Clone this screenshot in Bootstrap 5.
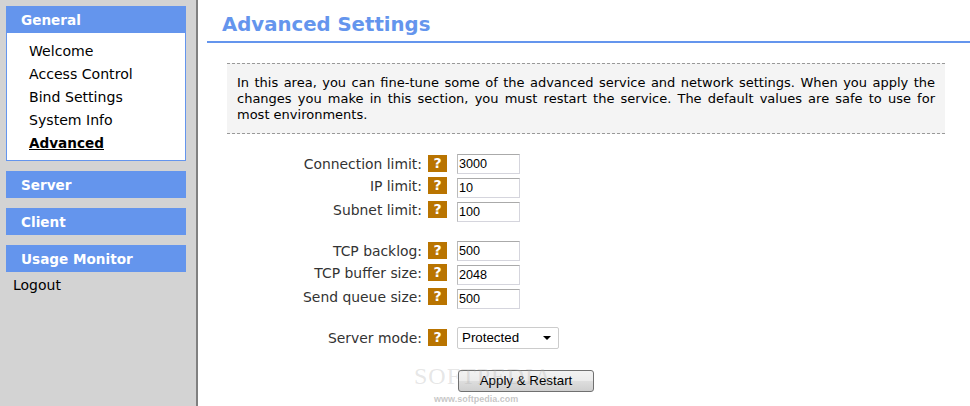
<!DOCTYPE html>
<html lang="en">
  <head>
    <meta charset="UTF-8" />
    <meta name="viewport" content="width=device-width, initial-scale=1.0" />
    <title>Advanced Settings</title>
    <link
      href="https://cdn.jsdelivr.net/npm/bootstrap@5.3.0/dist/css/bootstrap.min.css"
      rel="stylesheet"
    />
    <style>
      html, body { height: 406px; overflow: hidden; }
      body { font-family: "DejaVu Sans", Verdana, sans-serif; font-size: 14px; color: #000; background: #fff; }
      .app-shell { height: 406px; position: relative; overflow: hidden; }
      .side-area { width: 198px; flex: none; background: #d3d3d3; border-right: 2px solid #808080; padding: 6px 10px 0 6px; }
      .side-head { height: 27px; line-height: 28px; background: #6495ed; color: #fff; font-weight: 700; font-size: 13.6px; padding-left: 15px; margin-bottom: 10px; }
      .side-head.is-open { margin-bottom: 0; }
      .side-links { background: #fff; border: 1px solid #6495ed; border-top: 0; height: 128px; padding: 7px 0 0 22px; margin-bottom: 10px; }
      .side-links a { display: block; height: 23px; line-height: 23px; color: #000; text-decoration: none; font-size: 14.1px; }
      .side-links a.is-current { font-weight: 700; font-size: 13.6px; text-decoration: underline; }
      .logout-link { display: block; color: #000; text-decoration: none; font-size: 14px; line-height: 18px; margin: -6px 0 0 7px; }
      .main-area { flex: 1; padding: 10px 0 0 9px; min-width: 0; }
      .page-heading { font-size: 19.7px; font-weight: 700; color: #6495ed; line-height: 29px; height: 33px; margin: 0; padding-left: 15px; border-bottom: 2px solid #6495ed; }
      .intro-box { margin: 20px 25px 0 20px; height: 71px; padding: 11px 10px 0; background: #f4f4f4; border-top: 1px dashed #999; border-bottom: 1px dashed #999; font-size: 13px; line-height: 16px; text-align: justify; }
      .form-area { margin-top: 20px; }
      .form-line { height: 24px; display: flex; align-items: flex-start; }
      .form-gap { height: 15px; }
      .field-label { width: 215px; text-align: right; font-size: 13.9px; line-height: 21px; color: #333; flex: none; }
      .help-mark { width: 19px; height: 17px; margin: 1px 10px 0 6px; background: #b97400; color: #fff; font-weight: 700; font-size: 14px; line-height: 16px; text-align: center; flex: none; }
      .is-raised .field-label { margin-top: -2px; }
      .is-raised .help-mark { margin-top: -1px; }
      .num-field { width: 63px; height: 20px; border: 1px solid #d5d5dd; border-top-color: #aaa; border-left-color: #bbb; padding: 1px; font-family: "Liberation Sans", Arial, sans-serif; font-size: 12.6px; line-height: 16px; color: #000; }
      .mode-field { width: 102px; height: 22px; border: 1px solid #ccc; border-radius: 2px; padding: 0 4px; display: flex; align-items: center; justify-content: space-between; font-family: "Liberation Sans", Arial, sans-serif; font-size: 13.33px; background: #fff; margin-top: -1px; }
      .mode-arrow { width: 0; height: 0; border-left: 4px solid transparent; border-right: 4px solid transparent; border-top: 4px solid #000; margin-right: 3px; }
      .apply-wrap { padding-left: 251px; margin-top: 18px; }
      .apply-btn { width: 136px; height: 22px; padding: 0; border: 1px solid #707070; border-radius: 3px; background: linear-gradient(#f2f2f2 0%, #ebebeb 48%, #dddddd 52%, #cfcfcf 100%); font-family: "Liberation Sans", Arial, sans-serif; font-size: 13.33px; line-height: 20px; color: #000; }
      .mark-big { position: absolute; left: 414px; top: 364px; font-family: "Liberation Serif", serif; font-size: 24px; letter-spacing: 1px; color: rgba(170, 170, 170, 0.3); line-height: 24px; pointer-events: none; }
      .mark-small { position: absolute; left: 434px; top: 393px; font-family: "Liberation Sans", Arial, sans-serif; font-size: 9px; font-weight: 700; color: rgba(150, 150, 150, 0.55); line-height: 12px; pointer-events: none; }
    </style>
  </head>
  <body>
    <div class="app-shell d-flex">
      <div class="side-area">
        <div class="side-head is-open">General</div>
        <div class="side-links">
          <a href="#">Welcome</a>
          <a href="#">Access Control</a>
          <a href="#">Bind Settings</a>
          <a href="#">System Info</a>
          <a href="#" class="is-current">Advanced</a>
        </div>
        <div class="side-head">Server</div>
        <div class="side-head">Client</div>
        <div class="side-head">Usage Monitor</div>
        <a href="#" class="logout-link">Logout</a>
      </div>

      <div class="main-area">
        <h1 class="page-heading">Advanced Settings</h1>
        <div class="intro-box">
          In this area, you can fine-tune some of the advanced service and network settings. When you apply the changes you make in this section, you must restart the service. The default values are safe to use for most environments.
        </div>

        <form class="form-area" onsubmit="return false">
          <div class="form-line"><span class="field-label">Connection limit:</span><span class="help-mark">?</span><input class="num-field" value="3000" /></div>
          <div class="form-line is-raised"><span class="field-label">IP limit:</span><span class="help-mark">?</span><input class="num-field" value="10" /></div>
          <div class="form-line is-raised"><span class="field-label">Subnet limit:</span><span class="help-mark">?</span><input class="num-field" value="100" /></div>
          <div class="form-gap"></div>
          <div class="form-line"><span class="field-label">TCP backlog:</span><span class="help-mark">?</span><input class="num-field" value="500" /></div>
          <div class="form-line is-raised"><span class="field-label">TCP buffer size:</span><span class="help-mark">?</span><input class="num-field" value="2048" /></div>
          <div class="form-line is-raised"><span class="field-label">Send queue size:</span><span class="help-mark">?</span><input class="num-field" value="500" /></div>
          <div class="form-gap"></div>
          <div class="form-line"><span class="field-label">Server mode:</span><span class="help-mark">?</span><div class="mode-field"><span>Protected</span><span class="mode-arrow"></span></div></div>
          <div class="apply-wrap"><button type="button" class="apply-btn">Apply &amp; Restart</button></div>
        </form>
      </div>

      <div class="mark-big">SOFTPEDIA</div>
      <div class="mark-small">www.softpedia.com</div>
    </div>

    <script src="https://cdn.jsdelivr.net/npm/bootstrap@5.3.0/dist/js/bootstrap.bundle.min.js"></script>
  </body>
</html>
